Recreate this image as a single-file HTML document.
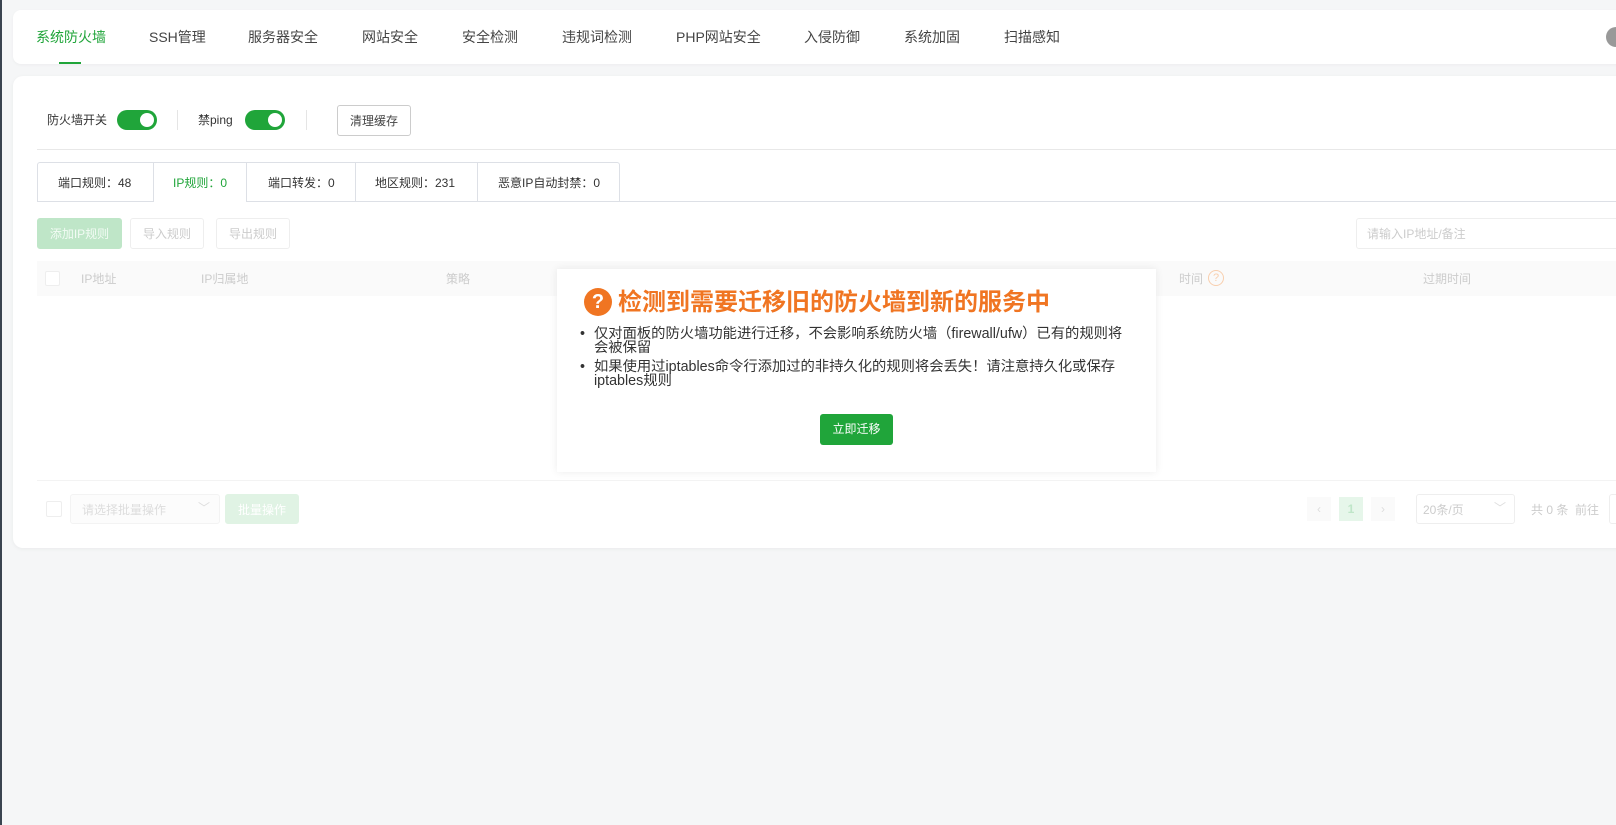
<!DOCTYPE html>
<html><head><meta charset="utf-8"><style>
*{box-sizing:border-box;margin:0;padding:0}
body{width:1616px;height:825px;overflow:hidden;background:#f5f6f7;font-family:"Liberation Sans","Noto Sans CJK SC",sans-serif;position:relative;color:#333}
.a{position:absolute}
.lb{left:0;top:0;width:2px;height:825px;background:#3a4450}
.nav{left:13px;top:10px;width:1640px;height:54px;background:#fff;border-radius:8px;box-shadow:0 1px 3px rgba(0,0,0,.04)}
.tab{top:28px;font-size:14px;color:#444;line-height:18px;white-space:nowrap}
.card{left:13px;top:76px;width:1640px;height:472px;background:#fff;border-radius:10px;box-shadow:0 1px 4px rgba(0,0,0,.05)}
.t12{font-size:12px;line-height:14px;white-space:nowrap}
.tog{width:40px;height:20px;border-radius:10px;background:#20a53a}
.tog:after{content:"";position:absolute;right:3px;top:3px;width:14px;height:14px;border-radius:50%;background:#fff}
.btn{border:1px solid #ddd;border-radius:3px;font-size:12px;display:flex;align-items:center;justify-content:center;background:#fff}
.ft{color:#ccc}
</style></head><body>
<div class="a lb"></div>
<div class="a nav"></div>
<div class="a tab" style="left:36px;color:#20a53a">系统防火墙</div>
<div class="a" style="left:59px;top:62px;width:22px;height:2px;background:#20a53a"></div>
<div class="a tab" style="left:149px">SSH管理</div>
<div class="a tab" style="left:248px">服务器安全</div>
<div class="a tab" style="left:362px">网站安全</div>
<div class="a tab" style="left:462px">安全检测</div>
<div class="a tab" style="left:562px">违规词检测</div>
<div class="a tab" style="left:676px">PHP网站安全</div>
<div class="a tab" style="left:804px">入侵防御</div>
<div class="a tab" style="left:904px">系统加固</div>
<div class="a tab" style="left:1004px">扫描感知</div>
<div class="a" style="left:1606px;top:27px;width:20px;height:20px;border-radius:50%;background:#999"></div>

<div class="a card"></div>
<div class="a t12" style="left:47px;top:113px">防火墙开关</div>
<div class="a tog" style="left:117px;top:110px"></div>
<div class="a" style="left:177px;top:110px;width:1px;height:20px;background:#e5e5e5"></div>
<div class="a t12" style="left:198px;top:113px">禁ping</div>
<div class="a tog" style="left:245px;top:110px"></div>
<div class="a" style="left:306px;top:110px;width:1px;height:20px;background:#e5e5e5"></div>
<div class="a btn" style="left:337px;top:105px;width:74px;height:31px;border-color:#ccc;color:#444">清理缓存</div>
<div class="a" style="left:37px;top:149px;width:1600px;height:1px;background:#e8e8e8"></div>

<div class="a" style="left:37px;top:201px;width:1600px;height:1px;background:#dde0e6"></div>
<div class="a" style="left:37px;top:162px;width:583px;height:40px;border:1px solid #dde0e6;border-bottom:none;border-radius:3px 3px 0 0"></div>
<div class="a" style="left:153px;top:163px;width:94px;height:39px;background:#fff;border-left:1px solid #dde0e6;border-right:1px solid #dde0e6"></div>
<div class="a" style="left:355px;top:162px;width:1px;height:40px;background:#dde0e6"></div>
<div class="a" style="left:477px;top:162px;width:1px;height:40px;background:#dde0e6"></div>
<div class="a t12" style="left:58px;top:176px">端口规则：48</div>
<div class="a t12" style="left:173px;top:176px;color:#20a53a">IP规则：0</div>
<div class="a t12" style="left:268px;top:176px">端口转发：0</div>
<div class="a t12" style="left:375px;top:176px">地区规则：231</div>
<div class="a t12" style="left:498px;top:176px">恶意IP自动封禁：0</div>

<div class="a btn" style="left:37px;top:218px;width:85px;height:31px;background:#bfe6c8;border-color:#bfe6c8;color:#f2fbf4">添加IP规则</div>
<div class="a btn ft" style="left:130px;top:218px;width:74px;height:31px;border-color:#eee">导入规则</div>
<div class="a btn ft" style="left:216px;top:218px;width:74px;height:31px;border-color:#eee">导出规则</div>
<div class="a" style="left:1356px;top:218px;width:280px;height:31px;border:1px solid #eee;border-radius:3px"></div>
<div class="a t12 ft" style="left:1367px;top:227px">请输入IP地址/备注</div>

<div class="a" style="left:37px;top:261px;width:1600px;height:35px;background:#fafafa"></div>
<div class="a" style="left:45px;top:271px;width:15px;height:15px;border:1px solid #eee;border-radius:2px;background:#fff"></div>
<div class="a t12 ft" style="left:81px;top:272px">IP地址</div>
<div class="a t12 ft" style="left:201px;top:272px">IP归属地</div>
<div class="a t12 ft" style="left:446px;top:272px">策略</div>
<div class="a t12 ft" style="left:1179px;top:272px">时间</div>
<div class="a" style="left:1208px;top:270px;width:16px;height:16px;border:1px solid #f8cfae;border-radius:50%;color:#f8cfae;font-size:11px;text-align:center;line-height:14px">?</div>
<div class="a t12 ft" style="left:1423px;top:272px">过期时间</div>
<div class="a" style="left:37px;top:480px;width:1600px;height:1px;background:#f3f3f3"></div>

<div class="a" style="left:46px;top:501px;width:16px;height:16px;border:1px solid #eee;border-radius:2px"></div>
<div class="a" style="left:70px;top:494px;width:150px;height:30px;border:1px solid #f3f3f3;border-radius:3px;background:#fcfcfc"></div>
<div class="a t12" style="left:82px;top:503px;color:#ddd">请选择批量操作</div>
<div class="a t12" style="left:198px;top:501px;color:#ddd">﹀</div>
<div class="a btn" style="left:225px;top:494px;width:74px;height:30px;background:#e0f3e4;border-color:#e0f3e4;color:#fff">批量操作</div>

<div class="a" style="left:1307px;top:497px;width:24px;height:24px;background:#fafafa;color:#ddd;font-size:12px;text-align:center;line-height:24px">‹</div>
<div class="a" style="left:1339px;top:497px;width:24px;height:24px;background:#e6f6ea;color:#bfe6c8;font-size:12px;text-align:center;line-height:24px;font-weight:bold">1</div>
<div class="a" style="left:1371px;top:497px;width:24px;height:24px;background:#fafafa;color:#ddd;font-size:12px;text-align:center;line-height:24px">›</div>
<div class="a" style="left:1416px;top:494px;width:99px;height:30px;border:1px solid #eee;border-radius:3px"></div>
<div class="a t12 ft" style="left:1423px;top:503px">20条/页</div>
<div class="a t12" style="left:1494px;top:501px;color:#ddd">﹀</div>
<div class="a t12 ft" style="left:1531px;top:503px">共 0 条&nbsp; 前往</div>
<div class="a" style="left:1609px;top:494px;width:30px;height:30px;border:1px solid #eee;border-radius:3px"></div>

<div class="a" style="left:557px;top:269px;width:599px;height:203px;background:#fff;box-shadow:0 0 8px rgba(0,0,0,.08)"></div>
<div class="a" style="left:584px;top:288px;width:28px;height:28px;border-radius:50%;background:#f07522;color:#fff;font-weight:bold;font-size:20px;text-align:center;line-height:28px">?</div>
<div class="a" style="left:618px;top:288px;font-size:24px;line-height:30px;font-weight:bold;color:#f07522;white-space:nowrap">检测到需要迁移旧的防火墙到新的服务中</div>
<div class="a" style="left:580px;top:327px;width:580px;font-size:14.3px;line-height:14px;color:#333">
<div style="position:relative;padding-left:14px;margin-bottom:5px"><span style="position:absolute;left:0;top:0">•</span>仅对面板的防火墙功能进行迁移，不会影响系统防火墙（firewall/ufw）已有的规则将<br>会被保留</div>
<div style="position:relative;padding-left:14px"><span style="position:absolute;left:0;top:0">•</span>如果使用过iptables命令行添加过的非持久化的规则将会丢失！请注意持久化或保存<br>iptables规则</div>
</div>
<div class="a" style="left:820px;top:414px;width:73px;height:31px;background:#20a53a;border-radius:3px;color:#fff;font-size:12px;text-align:center;line-height:31px">立即迁移</div>
</body></html>
